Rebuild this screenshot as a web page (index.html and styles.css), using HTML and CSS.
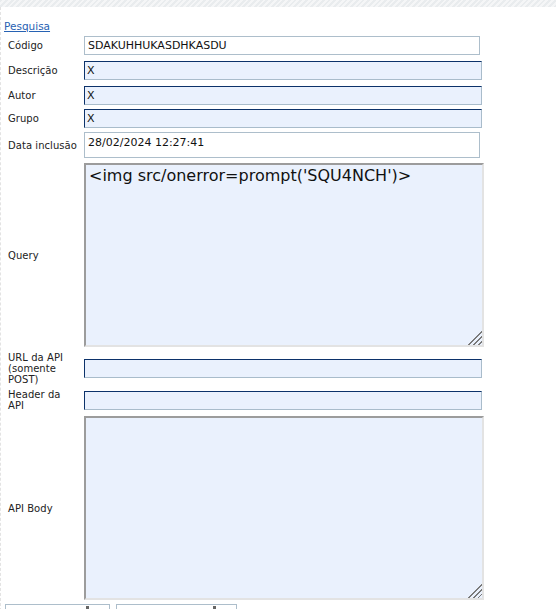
FILE: index.html
```html
<!DOCTYPE html>
<html lang="pt-BR">
<head>
<meta charset="utf-8">
<title>Pesquisa</title>
<link rel="stylesheet" href="styles.css">
</head>
<body>
<div class="topbar"></div>
<div class="page">
  <a class="link" href="#">Pesquisa</a>
  <div class="form">
    <div class="row">
      <span class="label">Código</span>
      <input class="field field-ro" type="text" value="SDAKUHHUKASDHKASDU" readonly>
    </div>
    <div class="row row-x2">
      <span class="label">Descrição</span>
      <input class="field field-edit" type="text" value="X">
    </div>
    <div class="row row-x2">
      <span class="label">Autor</span>
      <input class="field field-edit" type="text" value="X">
    </div>
    <div class="row">
      <span class="label">Grupo</span>
      <input class="field field-edit" type="text" value="X">
    </div>
    <div class="row">
      <span class="label">Data inclusão</span>
      <div class="field field-ro field-tall">28/02/2024 12:27:41</div>
    </div>
    <div class="row row-x1">
      <span class="label">Query</span>
      <textarea class="area">&lt;img src/onerror=prompt('SQU4NCH')&gt;</textarea>
    </div>
    <div class="row row-x1">
      <span class="label">URL da API (somente POST)</span>
      <input class="field field-edit" type="text" value="">
    </div>
    <div class="row">
      <span class="label">Header da API</span>
      <input class="field field-edit" type="text" value="">
    </div>
    <div class="row row-x1">
      <span class="label">API Body</span>
      <textarea class="area"></textarea>
    </div>
    <div class="buttons">
      <button class="btn btn-a" type="button"><span class="btn-mark"></span></button>
      <button class="btn btn-b" type="button"><span class="btn-mark"></span></button>
    </div>
  </div>
</div>
</body>
</html>
```

FILE: styles.css
```css
html, body {
  margin: 0;
  padding: 0;
  background: #ffffff;
}

body {
  font-family: "DejaVu Sans", Verdana, sans-serif;
  font-size: 10px;
  color: #1e1e1e;
}

.topbar {
  height: 7px;
  background: repeating-linear-gradient(135deg, #e9ecee 0 2px, #f5f6f7 2px 4px);
}

.page {
  border-left: 1px dashed #e3e3e3;
  padding: 13px 0 0 3px;
}

.link {
  display: block;
  width: max-content;
  font-size: 10.5px;
  line-height: 13px;
  color: #2762b3;
  text-decoration: underline;
}

.form {
  display: flex;
  flex-direction: column;
  gap: 4px;
  margin-top: 3px;
}

.row {
  display: flex;
  align-items: center;
}

.row-x1 { margin-top: 1px; }
.row-x2 { margin-top: 2px; }

.label {
  width: 70px;
  padding-left: 4px;
  margin-right: 6px;
  line-height: 11px;
  letter-spacing: 0.05px;
  color: #222;
}

.field {
  box-sizing: border-box;
  height: 19px;
  margin: 0;
  font-family: "DejaVu Sans", Verdana, sans-serif;
  font-size: 11px;
  color: #111;
  outline: none;
}

.field-ro {
  width: 396px;
  border: 1px solid #adbecb;
  background: #ffffff;
  padding: 0 3px;
}

.field-tall {
  height: 26px;
  padding: 3px 3px 0;
  line-height: 13px;
}

.field-edit {
  width: 398px;
  border: 1px solid;
  border-color: #0c326a #a9bccb #a9bccb #0c326a;
  background: #eaf1fd;
  padding: 0 2px;
}

.area {
  box-sizing: border-box;
  width: 400px;
  height: 184px;
  margin: 0;
  border: 2px solid;
  border-color: #9c9c9c #e3e3e3 #e3e3e3 #9c9c9c;
  background: #eaf1fd;
  padding: 1px 3px;
  font-family: "DejaVu Sans", Verdana, sans-serif;
  font-size: 16px;
  color: #111;
  outline: none;
}

.area::-webkit-resizer {
  background: linear-gradient(135deg,
    transparent 0 52%,
    #7a7a7a 52% 58%,
    transparent 58% 68%,
    #7a7a7a 68% 74%,
    transparent 74% 84%,
    #7a7a7a 84% 90%,
    transparent 90%);
}

.buttons {
  display: flex;
  gap: 6px;
  margin-left: 1px;
}

.btn {
  position: relative;
  box-sizing: border-box;
  height: 22px;
  margin: 0;
  border: 1px solid #adbecb;
  background: #ffffff;
  padding: 0;
}

.btn-a { width: 105px; }
.btn-b { width: 121px; }

.btn-mark {
  position: absolute;
  top: 1px;
  width: 3px;
  height: 4px;
  background: #666;
}

.btn-a .btn-mark { left: 80px; }
.btn-b .btn-mark { left: 96px; }
```
